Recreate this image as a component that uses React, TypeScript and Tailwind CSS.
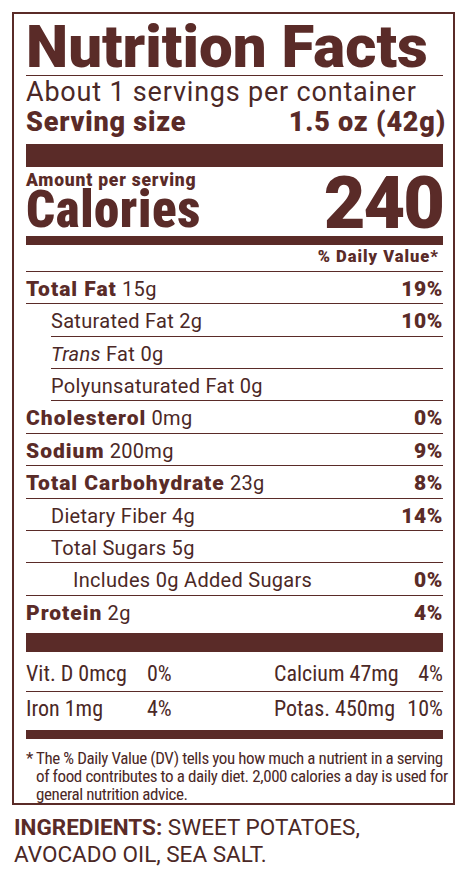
import React from "react";

type Variant = "full" | "ml" | "pl1" | "pl2" | "last";

const rowClass: Record<Variant, string> = {
  full: "flex justify-between items-start h-[32.4px] pt-[3px] text-[20px] leading-[28px] border-b border-[#5a2b28]",
  ml: "flex justify-between items-start h-[32.4px] pt-[3px] text-[20px] leading-[28px] ml-[25px] border-b border-[#5a2b28]",
  pl1: "flex justify-between items-start h-[32.4px] pt-[3px] text-[20px] leading-[28px] pl-[25px] border-b border-[#5a2b28]",
  pl2: "flex justify-between items-start h-[32.4px] pt-[3px] text-[20px] leading-[28px] pl-[47px] border-b border-[#5a2b28]",
  last: "flex justify-between items-start h-[31.4px] pt-[3px] text-[20px] leading-[28px]",
};

function Row({ children, pct, v }: { children: React.ReactNode; pct?: string; v: Variant }) {
  return (
    <div className={rowClass[v]}>
      <div className="whitespace-nowrap tracking-[0.3px]">{children}</div>
      {pct ? <div className="text-[21px] font-black tracking-[0.6px] text-[#5a2b28]">{pct}</div> : null}
    </div>
  );
}

function B({ children }: { children: React.ReactNode }) {
  return <span className="text-[21px] font-black tracking-[1px] text-[#5a2b28]">{children}</span>;
}

export default function App() {
  return (
    <div className="w-[471px] h-[879px] bg-white text-[#4b2826] [font-family:Roboto,sans-serif] pt-[12px] pl-[12px] overflow-hidden">
      <div className="w-[443px] border-2 border-[#5a2b28] pl-[12px] pr-[10px]">
        <div className="h-[62px] pt-[4px] text-[60px] leading-[57px] font-black text-[#5a2b28] whitespace-nowrap border-b border-[#5a2b28]">
          Nutrition Facts
        </div>
        <div className="mt-[2px] text-[27px] leading-[29px] tracking-[0.8px] whitespace-nowrap">
          About 1 servings per container
        </div>
        <div className="flex justify-between text-[27px] leading-[31px] font-black text-[#5a2b28] tracking-[0.8px] whitespace-nowrap">
          <span>Serving size</span>
          <span className="mr-[-3px]">1.5 oz (42g)</span>
        </div>
        <div className="mt-[6px] h-[23px] bg-[#5a2b28]" />
        <div className="mt-[5.4px] flex justify-between items-end text-[#5a2b28] font-black">
          <div>
            <div className="text-[17.5px] leading-[17px] tracking-[0.8px] whitespace-nowrap">Amount per serving</div>
            <div className="text-[51px] leading-[42.4px] [font-family:'Roboto_Condensed',sans-serif] tracking-[0.6px]">
              Calories
            </div>
          </div>
          <div className="text-[72px] leading-[57px] tracking-[-2px]">240</div>
        </div>
        <div className="mt-[4px] h-[9px] bg-[#5a2b28]" />
        <div className="text-right pr-[4px] pb-[2px] text-[16.5px] leading-[24px] font-black tracking-[1px] text-[#5a2b28] border-b border-[#5a2b28]">
          % Daily Value*
        </div>
        <Row v="full" pct="19%">
          <B>Total Fat</B> 15g
        </Row>
        <Row v="ml" pct="10%">
          Saturated Fat 2g
        </Row>
        <Row v="ml">
          <i>Trans</i> Fat 0g
        </Row>
        <Row v="ml">Polyunsaturated Fat 0g</Row>
        <Row v="full" pct="0%">
          <B>Cholesterol</B> 0mg
        </Row>
        <Row v="full" pct="9%">
          <B>Sodium</B> 200mg
        </Row>
        <Row v="full" pct="8%">
          <B>Total Carbohydrate</B> 23g
        </Row>
        <Row v="pl1" pct="14%">
          Dietary Fiber 4g
        </Row>
        <Row v="pl1">Total Sugars 5g</Row>
        <Row v="pl2" pct="0%">
          Includes 0g Added Sugars
        </Row>
        <Row v="last" pct="4%">
          <B>Protein</B> 2g
        </Row>
        <div className="mt-[5.5px] h-[19.5px] bg-[#5a2b28]" />
        <div className="grid grid-cols-[121px_127px_1fr_auto] h-[40px] pt-[10px] text-[22px] leading-[24px] [font-family:'Roboto_Condensed',sans-serif] border-b border-[#5a2b28] whitespace-nowrap">
          <span>Vit. D 0mcg</span>
          <span>0%</span>
          <span>Calcium 47mg</span>
          <span className="text-right">4%</span>
        </div>
        <div className="grid grid-cols-[121px_127px_1fr_auto] h-[38px] pt-[5px] text-[22px] leading-[24px] [font-family:'Roboto_Condensed',sans-serif] whitespace-nowrap">
          <span>Iron 1mg</span>
          <span>4%</span>
          <span>Potas. 450mg</span>
          <span className="text-right">10%</span>
        </div>
        <div className="h-[9px] bg-[#5a2b28]" />
        <div className="mt-[10px] flex [font-family:'Roboto_Condensed',sans-serif] text-[17px] leading-[18px] tracking-[-0.4px] whitespace-nowrap">
          <span className="w-[9px] shrink-0">*</span>
          <span className="pl-[1px]">
            The % Daily Value (DV) tells you how much a nutrient in a serving
            <br />
            of food contributes to a daily diet. 2,000 calories a day is used for
            <br />
            general nutrition advice.
          </span>
        </div>
      </div>
      <div className="mt-[9px] pl-[2px] text-[22.5px] leading-[26.6px] text-[#4b2826] whitespace-nowrap">
        <span className="font-bold text-[#5a2b28]">INGREDIENTS:</span> SWEET POTATOES,
        <br />
        AVOCADO OIL, SEA SALT.
      </div>
    </div>
  );
}
